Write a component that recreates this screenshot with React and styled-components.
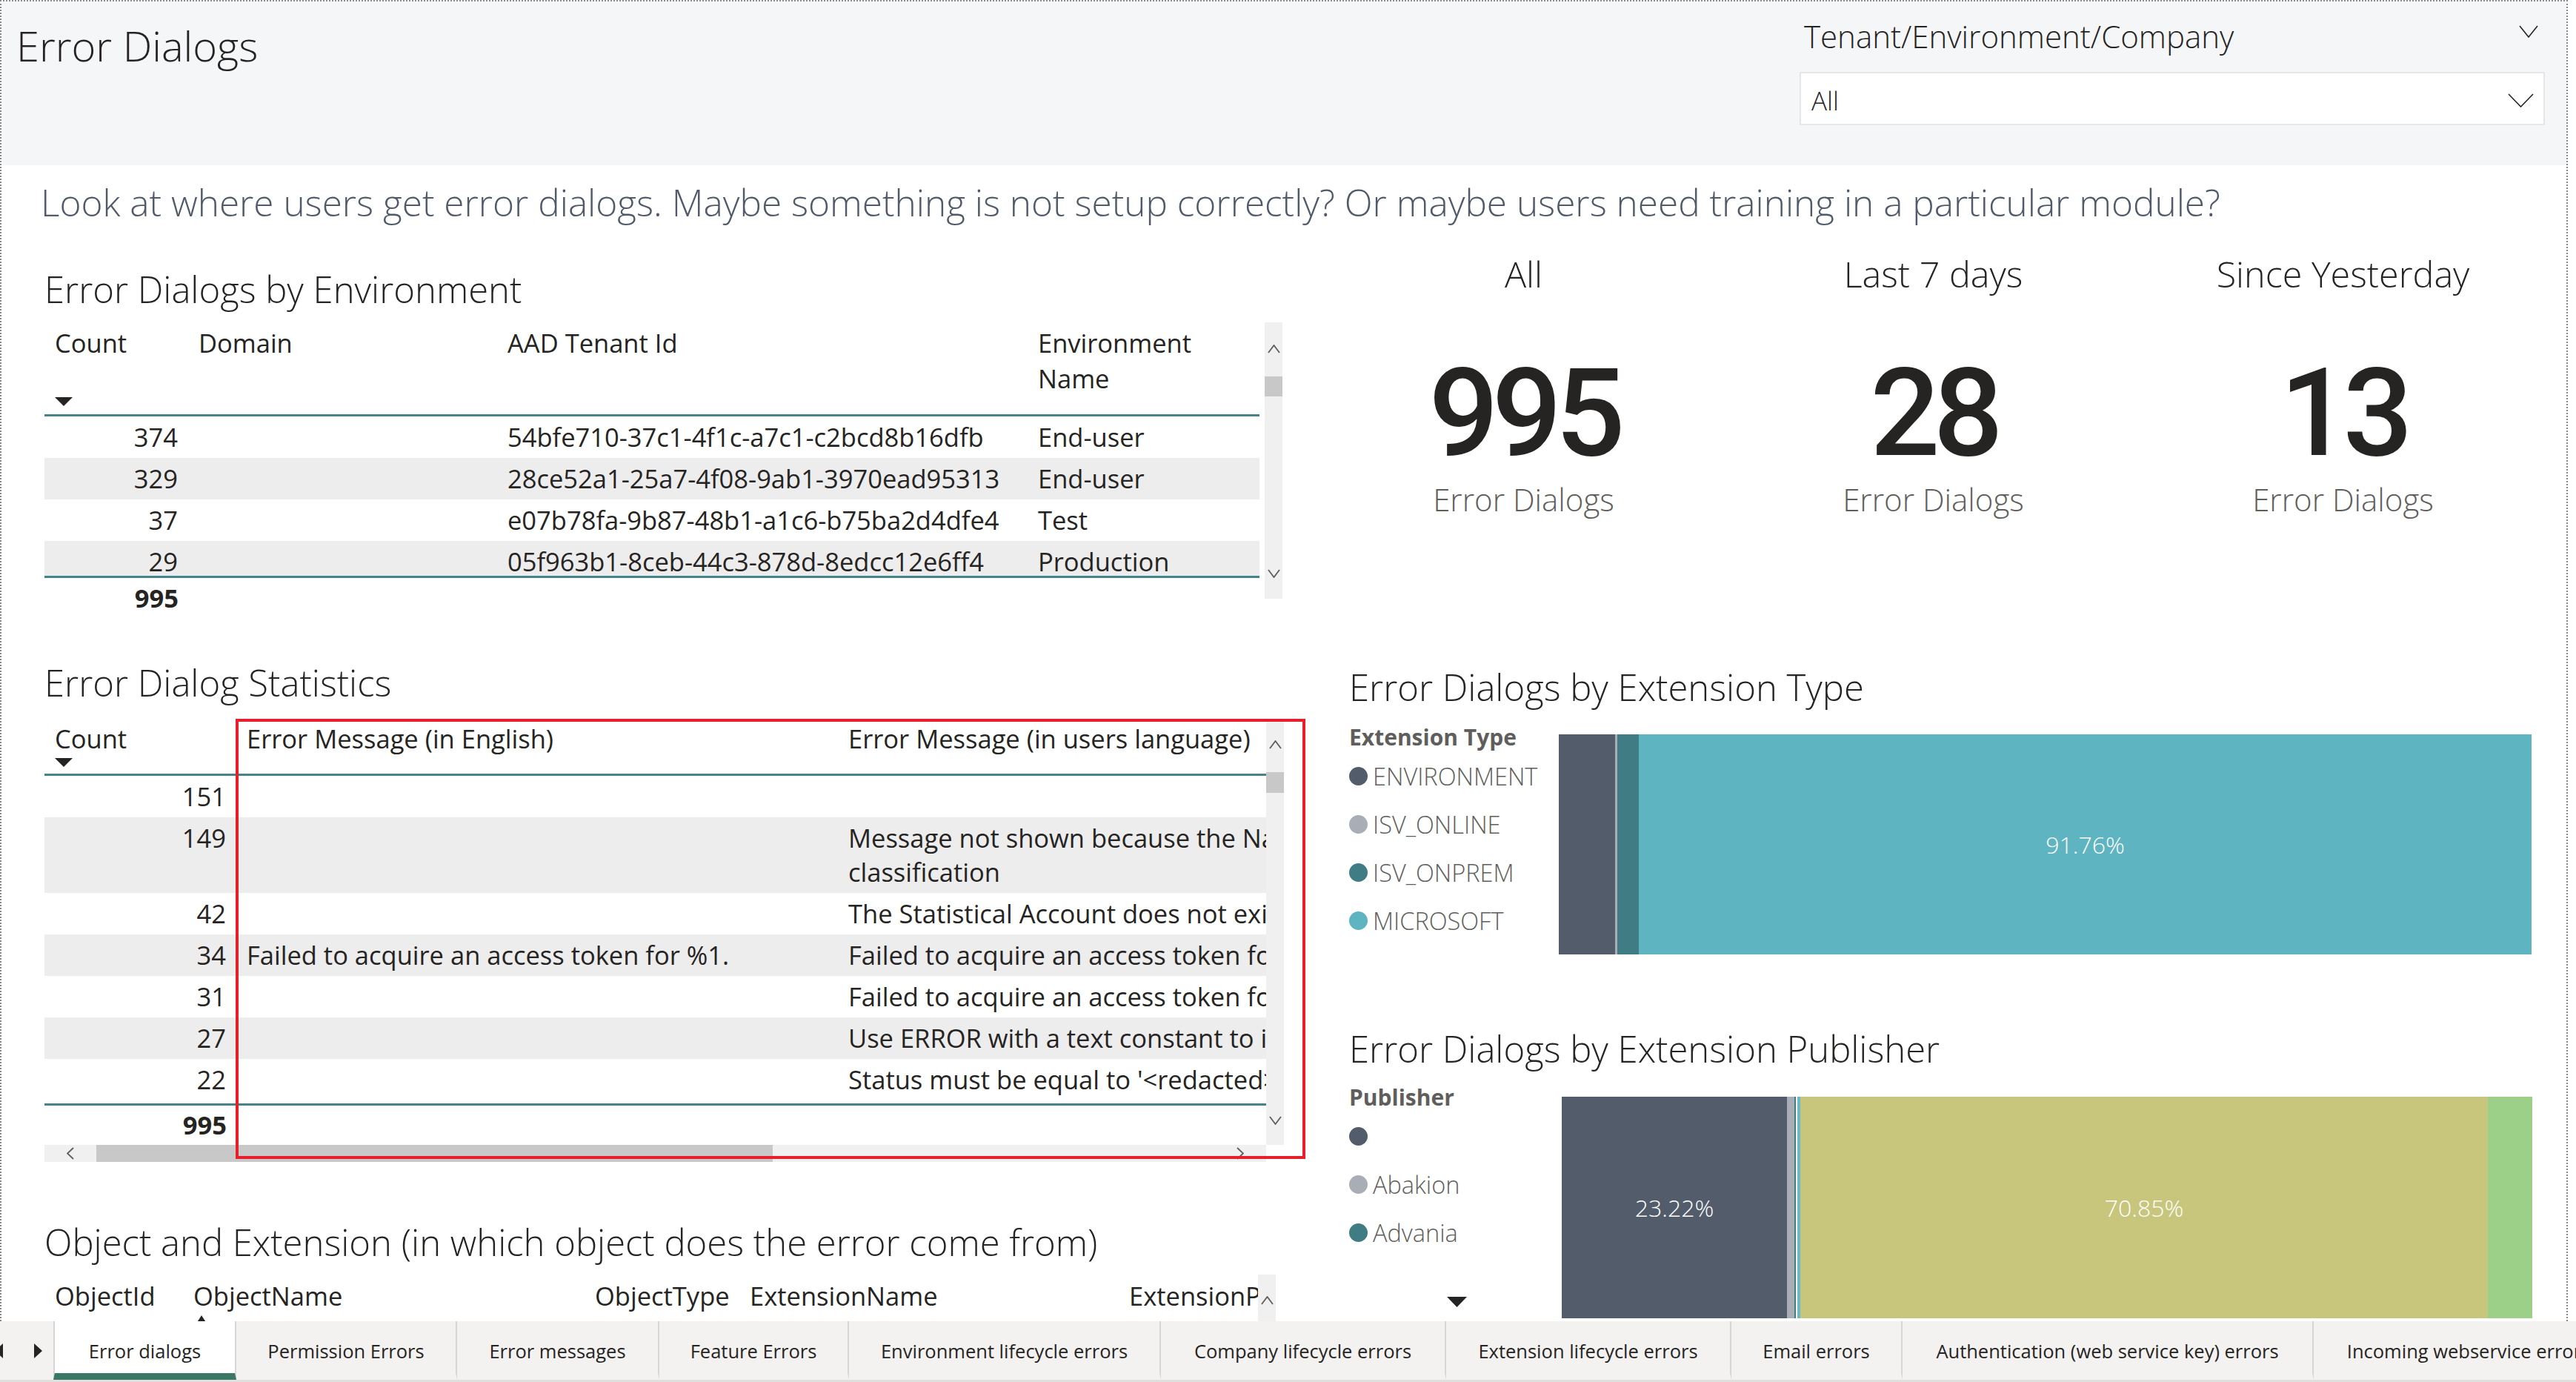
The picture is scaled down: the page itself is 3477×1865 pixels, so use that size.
import React from "react";
import styled, { createGlobalStyle } from "styled-components";

const GlobalStyle = createGlobalStyle`
  html, body {
    margin: 0;
    padding: 0;
    background: #ffffff;
  }
  body {
    font-family: "Open Sans", "Noto Sans", "Liberation Sans", sans-serif;
    color: #252423;
  }
  * {
    box-sizing: border-box;
  }
`;

const TEAL = "#46838a";

const Page = styled.div`
  width: 3477px;
  height: 1865px;
  overflow: hidden;
  display: flex;
  flex-direction: column;
  background: #fff;
`;

const Canvas = styled.div`
  width: 3466px;
  height: 1783px;
  flex-shrink: 0;
  border: 2px dotted #8a8a8a;
  border-bottom: none;
  overflow: hidden;
  display: flex;
  flex-direction: column;
`;

// top grey band with title + slicer
const HeaderBand = styled.div`
  height: 221px;
  flex-shrink: 0;
  background: #f5f6f7;
  display: flex;
  justify-content: space-between;
  align-items: flex-start;
  padding: 0 29px 0 20px;
`;

const PageTitle = styled.div`
  margin-top: 23px;
  font-size: 56px;
  line-height: 72px;
  font-weight: 300;
  color: #252423;
`;

const Slicer = styled.div`
  width: 1006px;
  margin-top: 22px;
  display: flex;
  flex-direction: column;
`;

const SlicerHead = styled.div`
  display: flex;
  justify-content: space-between;
  align-items: flex-start;
  padding: 0 9px 0 6px;
  font-size: 42px;
  line-height: 50px;
  font-weight: 300;
  svg {
    margin-top: 10px;
  }
`;

const Dropdown = styled.div`
  margin-top: 23px;
  height: 72px;
  background: #fff;
  border: 2px solid #e6e6e6;
  display: flex;
  align-items: center;
  justify-content: space-between;
  padding: 4px 13px 0 14px;
  font-size: 35px;
  font-weight: 300;
`;

const Subtitle = styled.div`
  height: 100px;
  flex-shrink: 0;
  padding: 20px 0 0 53px;
  font-size: 49.5px;
  line-height: 60px;
  font-weight: 300;
  color: #505a69;
  white-space: nowrap;
`;

const Body = styled.div`
  flex: 1;
  display: grid;
  grid-template-columns: 1720px 1660px;
  padding-left: 58px;
  min-height: 0;
`;

const LeftCol = styled.div`
  display: flex;
  flex-direction: column;
  min-width: 0;
`;

const RightCol = styled.div`
  display: flex;
  flex-direction: column;
`;

const SectionTitle = styled.div`
  margin-top: ${(p) => p.$mt}px;
  font-size: 49px;
  line-height: 60px;
  font-weight: 300;
  color: #252423;
  white-space: nowrap;
`;

/* ---------- tables ---------- */

const TableFrame = styled.div`
  position: relative;
  margin-top: ${(p) => p.$mt}px;
  display: flex;
  align-items: flex-start;
  gap: ${(p) => p.$gap || 0}px;
`;

const TableArea = styled.div`
  width: ${(p) => p.$w}px;
  overflow: hidden;
  flex-shrink: 0;
`;

const Grid = styled.div`
  display: grid;
  grid-template-columns: ${(p) => p.$cols};
  width: max-content;
`;

const HeadRow = styled(Grid)`
  height: ${(p) => p.$h}px;
  border-bottom: 3px solid ${TEAL};
  min-width: 100%;
`;

const HeadCell = styled.div`
  display: flex;
  flex-direction: column;
  padding: ${(p) => p.$pt || 0}px 14px ${(p) => p.$pb || 0}px 14px;
  font-size: 34.5px;
  line-height: 48px;
  white-space: nowrap;
  color: #252423;
`;

const SortMark = styled.div`
  margin-top: ${(p) => (p.$auto ? "auto" : `${p.$mt || 0}px`)};
  margin-left: ${(p) => p.$ml || 0}px;
  height: ${(p) => p.$h}px;
  display: flex;
  svg {
    display: block;
  }
`;

const RowsBox = styled.div`
  height: ${(p) => p.$h}px;
  overflow: hidden;
`;

const Row = styled(Grid)`
  background: ${(p) => (p.$striped ? "#ededed" : "#ffffff")};
  min-width: 100%;
`;

const Cell = styled.div`
  padding: 5px 14px;
  font-size: 34.5px;
  line-height: 46px;
  white-space: nowrap;
  overflow: hidden;
  text-align: ${(p) => p.$align || "left"};
  color: #252423;
`;

const TotalRow = styled(Grid)`
  border-top: 3px solid ${TEAL};
  min-width: 100%;
`;

const TotalCell = styled(Cell)`
  font-weight: 700;
  padding: ${(p) => p.$pt}px 13px 4px 14px;
`;

const VScroll = styled.div`
  width: 24px;
  height: ${(p) => p.$h}px;
  flex-shrink: 0;
  background: #f0f0f0;
  display: flex;
  flex-direction: column;
  align-items: center;
  padding: ${(p) => p.$up}px 0 ${(p) => p.$down}px;
`;

const Thumb = styled.div`
  width: 100%;
  height: ${(p) => p.$h}px;
  margin-top: ${(p) => p.$mt}px;
  background: #c8c8c8;
`;

const Spacer = styled.div`
  flex: 1;
`;

const HScroll = styled.div`
  height: 23px;
  width: 100%;
  background: #f0f0f0;
  display: flex;
  align-items: center;
`;

const HThumb = styled.div`
  width: ${(p) => p.$w}px;
  height: 100%;
  background: #c8c8c8;
`;

const ScrollArrowBox = styled.div`
  width: 70px;
  display: flex;
  justify-content: center;
  flex-shrink: 0;
`;

const HighlightBox = styled.div`
  position: absolute;
  left: 258px;
  top: -3px;
  width: 1444px;
  height: 594px;
  border: 4px solid #e81f2b;
  pointer-events: none;
`;

/* ---------- KPI cards ---------- */

const KpiRow = styled.div`
  margin-top: 16px;
  display: grid;
  grid-template-columns: repeat(3, 553px);
`;

const Kpi = styled.div`
  display: flex;
  flex-direction: column;
  align-items: center;
`;

const KpiLabel = styled.div`
  font-size: 48.5px;
  line-height: 60px;
  font-weight: 300;
  color: #252423;
`;

const KpiValue = styled.div`
  margin-top: 74px;
  font-family: Roboto, "Open Sans", sans-serif;
  font-size: 166px;
  line-height: 170px;
  font-weight: 500;
  letter-spacing: -9px;
  color: #252423;
`;

const KpiSub = styled.div`
  margin-top: 5px;
  font-size: 42px;
  line-height: 52px;
  font-weight: 300;
  color: #605e5c;
`;

/* ---------- charts ---------- */

const ChartBlock = styled.div`
  padding-left: 41px;
  display: flex;
  flex-direction: column;
`;

const ChartBody = styled.div`
  margin-top: ${(p) => p.$mt}px;
  display: flex;
  align-items: flex-start;
`;

const Legend = styled.div`
  width: ${(p) => p.$w}px;
  flex-shrink: 0;
  display: flex;
  flex-direction: column;
`;

const LegendTitle = styled.div`
  font-size: 30px;
  line-height: 40px;
  font-weight: 700;
  color: #605e5c;
`;

const LegendItem = styled.div`
  height: 65px;
  display: flex;
  align-items: center;
  gap: 7px;
  font-size: 32.5px;
  font-weight: 300;
  color: #605e5c;
  white-space: nowrap;
`;

const Dot = styled.span`
  width: 25px;
  height: 25px;
  border-radius: 50%;
  background: ${(p) => p.$c};
  flex-shrink: 0;
`;

const LegendMore = styled.div`
  margin: 54px 0 0 132px;
  display: flex;
`;

const Bar = styled.div`
  margin-top: ${(p) => p.$mt}px;
  width: ${(p) => p.$w}px;
  height: ${(p) => p.$h}px;
  display: flex;
`;

const Segment = styled.div`
  flex: ${(p) => p.$share} 0 0;
  background: ${(p) => p.$c};
  display: flex;
  align-items: center;
  justify-content: center;
  color: #fff;
  font-size: 32px;
  font-weight: 300;
  overflow: hidden;
  white-space: nowrap;
`;

/* ---------- page tabs ---------- */

const TabBar = styled.div`
  height: 82px;
  flex-shrink: 0;
  background: #f3f2f1;
  border-bottom: 3px solid #e1dfdd;
  display: flex;
  overflow: hidden;
`;

const TabNav = styled.div`
  width: 72px;
  flex-shrink: 0;
  display: flex;
  align-items: center;
`;

const Tab = styled.div`
  width: ${(p) => p.$w}px;
  flex-shrink: 0;
  display: flex;
  align-items: center;
  justify-content: center;
  font-size: 25.5px;
  color: #252423;
  white-space: nowrap;
  background: ${(p) => (p.$active ? "#ffffff" : "transparent")};
  border-right: 2px solid #d6d6d6;
  border-left: ${(p) => (p.$first ? "2px solid #d6d6d6" : "none")};
  border-bottom: 9px solid ${(p) => (p.$active ? "#3b7766" : "transparent")};
  padding-top: 9px;
`;

/* ---------- icons ---------- */

const Chevron = ({ dir = "down", w = 26, h = 16, color = "#252423", sw = 1.6 }) => {
  const pts = {
    down: `1,1 ${w / 2},${h - 1} ${w - 1},1`,
    up: `1,${h - 1} ${w / 2},1 ${w - 1},${h - 1}`,
    left: `${w - 1},1 1,${h / 2} ${w - 1},${h - 1}`,
    right: `1,1 ${w - 1},${h / 2} 1,${h - 1}`,
  }[dir];
  return (
    <svg width={w} height={h} viewBox={`0 0 ${w} ${h}`} style={{ display: "block" }}>
      <polyline points={pts} fill="none" stroke={color} strokeWidth={sw} />
    </svg>
  );
};

const Tri = ({ dir = "down", w = 24, h = 12, color = "#252423" }) => {
  const pts =
    dir === "down"
      ? `0,0 ${w},0 ${w / 2},${h}`
      : `0,${h} ${w},${h} ${w / 2},0`;
  return (
    <svg width={w} height={h} viewBox={`0 0 ${w} ${h}`}>
      <polygon points={pts} fill={color} />
    </svg>
  );
};

/* ---------- data ---------- */

const envCols = "194px 417px 716px 313px";
const envRows = [
  ["374", "", "54bfe710-37c1-4f1c-a7c1-c2bcd8b16dfb", "End-user"],
  ["329", "", "28ce52a1-25a7-4f08-9ab1-3970ead95313", "End-user"],
  ["37", "", "e07b78fa-9b87-48b1-a1c6-b75ba2d4dfe4", "Test"],
  ["29", "", "05f963b1-8ceb-44c3-878d-8edcc12e6ff4", "Production"],
];

const statCols = "259px 812px 900px";
const statRows = [
  ["151", "", ""],
  ["149", "", "Message not shown because the Name or Description has a data\nclassification"],
  ["42", "", "The Statistical Account does not exist in the company."],
  ["34", "Failed to acquire an access token for %1.", "Failed to acquire an access token for %1."],
  ["31", "", "Failed to acquire an access token for the service."],
  ["27", "", "Use ERROR with a text constant to improve telemetry details"],
  ["22", "", "Status must be equal to '<redacted>' in Sales Header."],
];

const objCols = "187px 542px 209px 512px 400px";
const objHeads = ["ObjectId", "ObjectName", "ObjectType", "ExtensionName", "ExtensionPublisher"];

const kpis = [
  { label: "All", value: "995" },
  { label: "Last 7 days", value: "28" },
  { label: "Since Yesterday", value: "13" },
];

const extTypes = [
  { name: "ENVIRONMENT", c: "#525c6b", share: 5.79 },
  { name: "ISV_ONLINE", c: "#a8adb6", share: 0.23 },
  { name: "ISV_ONPREM", c: "#3f7c84", share: 2.22 },
  { name: "MICROSOFT", c: "#5fb4c1", share: 91.76, label: "91.76%" },
];

const publishers = [
  { name: "", c: "#525c6b", share: 23.22, label: "23.22%" },
  { name: "Abakion", c: "#a8adb6", share: 0.76 },
  { name: "Advania", c: "#3f7c84", share: 0.15 },
  { name: "", c: "#ffffff", share: 0.15 },
  { name: "", c: "#6ab9c5", share: 0.3 },
  { name: "", c: "#c7c67c", share: 70.85, label: "70.85%" },
  { name: "", c: "#9ccf88", share: 4.57 },
];

const tabs = [
  { label: "Error dialogs", w: 247, active: true },
  { label: "Permission Errors", w: 298 },
  { label: "Error messages", w: 273 },
  { label: "Feature Errors", w: 256 },
  { label: "Environment lifecycle errors", w: 421 },
  { label: "Company lifecycle errors", w: 385 },
  { label: "Extension lifecycle errors", w: 385 },
  { label: "Email errors", w: 231 },
  { label: "Authentication (web service key) errors", w: 555 },
  { label: "Incoming webservice errors", w: 420 },
];

const renderText = (t) =>
  t.split("\n").map((line, i) => (
    <React.Fragment key={i}>
      {i > 0 && <br />}
      {line}
    </React.Fragment>
  ));

const App = () => {
  return (
    <Page>
      <GlobalStyle />
      <Canvas>
        <HeaderBand>
          <PageTitle>Error Dialogs</PageTitle>
          <Slicer>
            <SlicerHead>
              <span>Tenant/Environment/Company</span>
              <Chevron w={26} h={17} />
            </SlicerHead>
            <Dropdown>
              <span>All</span>
              <Chevron w={35} h={19} />
            </Dropdown>
          </Slicer>
        </HeaderBand>

        <Subtitle>
          Look at where users get error dialogs. Maybe something is not setup correctly? Or maybe
          users need training in a particular module?
        </Subtitle>

        <Body>
          <LeftCol>
            <SectionTitle $mt={37}>Error Dialogs by Environment</SectionTitle>
            <TableFrame $mt={15} $gap={7}>
              <TableArea $w={1640}>
                <HeadRow $cols={envCols} $h={127}>
                  <HeadCell $pt={4} $pb={11}>
                    Count
                    <SortMark $auto $h={12}>
                      <Tri />
                    </SortMark>
                  </HeadCell>
                  <HeadCell $pt={4}>Domain</HeadCell>
                  <HeadCell $pt={4}>AAD Tenant Id</HeadCell>
                  <HeadCell $pt={4}>
                    Environment
                    <br />
                    Name
                  </HeadCell>
                </HeadRow>
                <RowsBox $h={215}>
                  {envRows.map((r, i) => (
                    <Row key={i} $cols={envCols} $striped={i % 2 === 1}>
                      {r.map((c, j) => (
                        <Cell key={j} $align={j === 0 ? "right" : "left"}>
                          {c}
                        </Cell>
                      ))}
                    </Row>
                  ))}
                </RowsBox>
                <TotalRow $cols={envCols}>
                  <TotalCell $align="right" $pt={4}>
                    995
                  </TotalCell>
                </TotalRow>
              </TableArea>
              <VScroll $h={373} $up={30} $down={28}>
                <Chevron dir="up" w={17} h={12} color="#605e5c" sw={1.8} />
                <Thumb $mt={31} $h={27} />
                <Spacer />
                <Chevron w={17} h={12} color="#605e5c" sw={1.8} />
              </VScroll>
            </TableFrame>

            <SectionTitle $mt={57}>Error Dialog Statistics</SectionTitle>
            <TableFrame $mt={22}>
              <TableArea $w={1649}>
                <HeadRow $cols={statCols} $h={74}>
                  <HeadCell $pb={9}>
                    Count
                    <SortMark $auto $h={12}>
                      <Tri />
                    </SortMark>
                  </HeadCell>
                  <HeadCell>Error Message (in English)</HeadCell>
                  <HeadCell>Error Message (in users language)</HeadCell>
                </HeadRow>
                <RowsBox $h={442}>
                  {statRows.map((r, i) => (
                    <Row key={i} $cols={statCols} $striped={i % 2 === 1}>
                      {r.map((c, j) => (
                        <Cell key={j} $align={j === 0 ? "right" : "left"}>
                          {renderText(c)}
                        </Cell>
                      ))}
                    </Row>
                  ))}
                </RowsBox>
                <TotalRow $cols={statCols}>
                  <TotalCell $align="right" $pt={3}>
                    995
                  </TotalCell>
                </TotalRow>
                <HScroll>
                  <ScrollArrowBox>
                    <Chevron dir="left" w={10} h={17} color="#605e5c" sw={1.8} />
                  </ScrollArrowBox>
                  <HThumb $w={913} />
                  <Spacer />
                  <ScrollArrowBox>
                    <Chevron dir="right" w={10} h={17} color="#605e5c" sw={1.8} />
                  </ScrollArrowBox>
                </HScroll>
              </TableArea>
              <VScroll $h={572} $up={26} $down={27}>
                <Chevron dir="up" w={17} h={12} color="#605e5c" sw={1.8} />
                <Thumb $mt={31} $h={28} />
                <Spacer />
                <Chevron w={17} h={12} color="#605e5c" sw={1.8} />
              </VScroll>
              <HighlightBox />
            </TableFrame>

            <SectionTitle $mt={78}>
              Object and Extension (in which object does the error come from)
            </SectionTitle>
            <TableFrame $mt={14}>
              <TableArea $w={1638}>
                <Grid $cols={objCols}>
                  {objHeads.map((h, i) => (
                    <HeadCell key={h} $pt={5}>
                      {h}
                      {i === 1 && (
                        <SortMark $mt={2} $ml={2} $h={14}>
                          <Tri dir="up" w={18} h={14} />
                        </SortMark>
                      )}
                    </HeadCell>
                  ))}
                </Grid>
              </TableArea>
              <VScroll $h={80} $up={29} $down={0}>
                <Chevron dir="up" w={17} h={12} color="#605e5c" sw={1.8} />
              </VScroll>
            </TableFrame>
          </LeftCol>

          <RightCol>
            <KpiRow>
              {kpis.map((k) => (
                <Kpi key={k.label}>
                  <KpiLabel>{k.label}</KpiLabel>
                  <KpiValue>{k.value}</KpiValue>
                  <KpiSub>Error Dialogs</KpiSub>
                </Kpi>
              ))}
            </KpiRow>

            <ChartBlock>
              <SectionTitle $mt={197}>Error Dialogs by Extension Type</SectionTitle>
              <ChartBody $mt={18}>
                <Legend $w={283}>
                  <LegendTitle>Extension Type</LegendTitle>
                  {extTypes.map((t) => (
                    <LegendItem key={t.name}>
                      <Dot $c={t.c} />
                      {t.name}
                    </LegendItem>
                  ))}
                </Legend>
                <Bar $mt={16} $w={1313} $h={297}>
                  {extTypes.map((t) => (
                    <Segment key={t.name} $c={t.c} $share={t.share}>
                      {t.label}
                    </Segment>
                  ))}
                </Bar>
              </ChartBody>
            </ChartBlock>

            <ChartBlock>
              <SectionTitle $mt={97}>Error Dialogs by Extension Publisher</SectionTitle>
              <ChartBody $mt={16}>
                <Legend $w={287}>
                  <LegendTitle>Publisher</LegendTitle>
                  {publishers.slice(0, 3).map((p, i) => (
                    <LegendItem key={i}>
                      <Dot $c={p.c} />
                      {p.name}
                    </LegendItem>
                  ))}
                  <LegendMore>
                    <Tri w={27} h={14} />
                  </LegendMore>
                </Legend>
                <Bar $mt={19} $w={1310} $h={299}>
                  {publishers.map((p, i) => (
                    <Segment key={i} $c={p.c} $share={p.share}>
                      {p.label}
                    </Segment>
                  ))}
                </Bar>
              </ChartBody>
            </ChartBlock>
          </RightCol>
        </Body>
      </Canvas>

      <TabBar>
        <TabNav>
          <svg width="72" height="22" viewBox="0 0 72 22">
            <polygon points="4,1 4,21 -7,11" fill="#252423" />
            <polygon points="46,1 46,21 57,11" fill="#252423" />
          </svg>
        </TabNav>
        {tabs.map((t, i) => (
          <Tab key={t.label} $w={t.w} $active={t.active} $first={i === 0}>
            {t.label}
          </Tab>
        ))}
      </TabBar>
    </Page>
  );
};

export default App;
